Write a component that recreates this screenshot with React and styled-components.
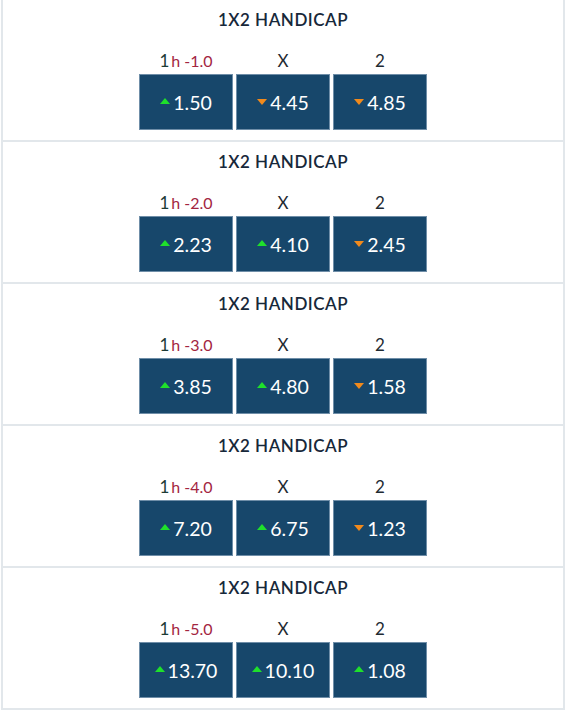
import React from 'react';
import styled, { createGlobalStyle } from 'styled-components';

const GlobalStyle = createGlobalStyle`
    html, body{
        margin: 0;
        padding: 0;
        background: #ffffff;
        font-family: "Lato", "Noto Sans", sans-serif;
    }
`;

const Wrapper = styled.div`
    margin: 0 1px;
    border-left: 2px solid #e2e7eb;
    border-right: 2px solid #e2e7eb;
`;

const Market = styled.section`
    height: 140px;
    border-bottom: 2px solid #e2e7eb;
    display: flex;
    flex-direction: column;
    align-items: center;

    h2{
        margin: 9px 0 0;
        font-size: 17px;
        font-weight: 600;
        color: #17283a;
        letter-spacing: 0.5px;
        line-height: 22px;
    }
`;

const Grid = styled.div`
    margin-top: 20px;
    display: grid;
    grid-template-columns: repeat(3, 94px);
    column-gap: 3px;
`;

const Label = styled.div`
    text-align: center;
    font-size: 17px;
    font-weight: 400;
    line-height: 20px;
    color: #1f2b33;
    padding-bottom: 3px;

    .one{
        color: #1d3b35;
    }

    .hcp{
        color: #a3253f;
        font-size: 16px;
        margin-left: 2px;
    }
`;

const Odd = styled.button`
    height: 56px;
    background: #17476b;
    border: 1px solid #6f8ea8;
    color: #ffffff;
    font-family: inherit;
    font-size: 19.5px;
    display: flex;
    align-items: center;
    justify-content: center;
    gap: 3px;
    padding: 0;
`;

const Arrow = styled.span`
    width: 0;
    height: 0;
    border-left: 5.5px solid transparent;
    border-right: 5.5px solid transparent;
    ${({ $up }) => $up
        ? 'border-bottom: 6px solid #1fe02b;'
        : 'border-top: 6px solid #f18a1c;'}
    margin-top: ${({ $up }) => ($up ? '-2px' : '0')};
`;

const markets = [
    { hcp: '-1.0', odds: [['1.50', true], ['4.45', false], ['4.85', false]] },
    { hcp: '-2.0', odds: [['2.23', true], ['4.10', true], ['2.45', false]] },
    { hcp: '-3.0', odds: [['3.85', true], ['4.80', true], ['1.58', false]] },
    { hcp: '-4.0', odds: [['7.20', true], ['6.75', true], ['1.23', false]] },
    { hcp: '-5.0', odds: [['13.70', true], ['10.10', true], ['1.08', true]] },
];

const App = () => {
    return (
        <>
            <GlobalStyle />
            <Wrapper>
                {markets.map((m) => (
                    <Market key={m.hcp}>
                        <h2>1X2 HANDICAP</h2>
                        <Grid>
                            <Label>
                                <span className="one">1</span>
                                <span className="hcp">h {m.hcp}</span>
                            </Label>
                            <Label>X</Label>
                            <Label>2</Label>
                            {m.odds.map(([value, up], i) => (
                                <Odd key={i}>
                                    <Arrow $up={up} />
                                    {value}
                                </Odd>
                            ))}
                        </Grid>
                    </Market>
                ))}
            </Wrapper>
        </>
    )
};

export default App;
